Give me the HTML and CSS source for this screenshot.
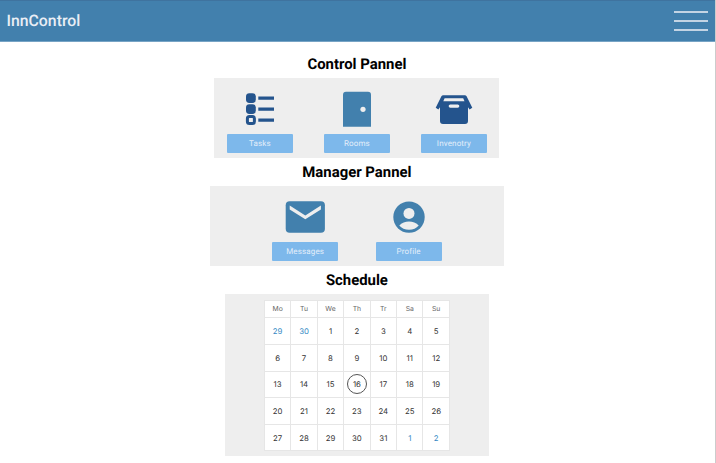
FILE: index.html
```html
<!DOCTYPE html>
<html lang="en">
<head>
<meta charset="utf-8">
<title>InnControl</title>
<link rel="stylesheet" href="styles.css">
</head>
<body>
<header class="topbar">
  <span class="brand">InnControl</span>
  <div class="menu"><i></i><i></i><i></i></div>
</header>
<main>
  <h2>Control Pannel</h2>
  <section class="panel control">
    <div class="item">
      <svg class="icon" width="66" height="44" viewBox="0 0 66 44" fill="#24548d">
        <rect x="19" y="3.2" width="9.8" height="9.8" rx="3.4"/>
        <rect x="19" y="14.2" width="9.8" height="9.8" rx="3.4"/>
        <rect x="20.4" y="26.4" width="7" height="7" rx="2" fill="none" stroke="#24548d" stroke-width="3"/>
        <path d="M31.3 6.6H47v3.1H31.3zM31.3 17.6H47v3.1H31.3zM31.3 28.6H47v3.1H31.3z"/>
      </svg>
      <div class="button">Tasks</div>
    </div>
    <div class="item">
      <svg class="icon" width="66" height="44" viewBox="0 0 66 44">
        <path fill="#4280ad" d="M19 36.8V4.8a3 3 0 0 1 3-3H44a3 3 0 0 1 3 3v32z"/>
        <circle cx="39" cy="19.3" r="2.6" fill="#eee"/>
      </svg>
      <div class="button">Rooms</div>
    </div>
    <div class="item">
      <svg class="icon" width="66" height="44" viewBox="0 0 66 44">
        <path fill="#24548d" d="M22.2 5.2H43.8Q45 5.2 45.6 6.3L51.3 17.8 48.6 19.5 47 17.2V31a3 3 0 0 1-3 3H22a3 3 0 0 1-3-3V17.2L17.4 19.5 14.7 17.8 20.4 6.3Q21 5.2 22.2 5.2z"/>
        <path fill="#eee" d="M23.6 8.2H42.2L43.5 11.3H22.3zM29.3 14.4h7.4a1.5 1.5 0 0 1 0 3.3h-7.4a1.5 1.5 0 0 1 0-3.3z"/>
      </svg>
      <div class="button">Invenotry</div>
    </div>
  </section>
  <h2>Manager Pannel</h2>
  <section class="panel manager">
    <div class="item">
      <svg class="icon" width="66" height="44" viewBox="0 0 66 44">
        <rect x="13.7" y="3.3" width="39.2" height="31.5" rx="4" fill="#4280ad"/>
        <path fill="#eee" d="M17.7 7.6L33.3 17.4 48.9 7.6V11.4L33.3 21.3 17.7 11.4z"/>
      </svg>
      <div class="button">Messages</div>
    </div>
    <div class="item">
      <svg class="icon" width="66" height="44" viewBox="0 0 66 44">
        <circle cx="33" cy="19.1" r="15.7" fill="#4280ad"/>
        <circle cx="33" cy="15.4" r="5.5" fill="#eee"/>
        <path fill="#eee" d="M23.3 27.6C25.5 24.8 29.5 23.4 33 23.4S40.5 24.8 42.7 27.6C40.5 30.4 37 31.8 33 31.8S25.5 30.4 23.3 27.6z"/>
      </svg>
      <div class="button">Profile</div>
    </div>
  </section>
  <h2>Schedule</h2>
  <section class="panel schedule">
    <div class="calendar">
      <b>Mo</b><b>Tu</b><b>We</b><b>Th</b><b>Tr</b><b>Sa</b><b>Su</b>
      <span class="other">29</span><span class="other">30</span><span>1</span><span>2</span><span>3</span><span>4</span><span>5</span>
      <span>6</span><span>7</span><span>8</span><span>9</span><span>10</span><span>11</span><span>12</span>
      <span>13</span><span>14</span><span>15</span><span><em>16</em></span><span>17</span><span>18</span><span>19</span>
      <span>20</span><span>21</span><span>22</span><span>23</span><span>24</span><span>25</span><span>26</span>
      <span>27</span><span>28</span><span>29</span><span>30</span><span>31</span><span class="other">1</span><span class="other">2</span>
    </div>
  </section>
</main>
</body>
</html>
```
FILE: styles.css
```css
* { box-sizing: border-box; }
body {
  margin: 0;
  height: 463px;
  overflow: hidden;
  background: #fff;
  border-right: 1px solid #ccc;
  font-family: Roboto, sans-serif;
  text-rendering: geometricPrecision;
}
.topbar {
  height: 42px;
  margin-right: -1px;
  padding: 0 7px 1.5px 6.5px;
  border-top: 1px solid #3f739f;
  border-right: 1px solid #6596bb;
  border-bottom: 1px solid #77a4c5;
  background: #4280ad;
  display: flex;
  align-items: center;
  justify-content: space-between;
}
.brand { color: #e9eef5; font-size: 15.8px; font-weight: 500; }
.menu { width: 34px; display: grid; gap: 7px; padding-top: 1px; }
.menu i { height: 2px; background: #c3d4e4; }
main { display: flex; flex-direction: column; align-items: center; padding: 8.4px 1.2px 0 0; }
h2 {
  margin: 0;
  height: 28px;
  line-height: 28px;
  font-size: 14.9px;
  font-weight: 700;
  color: #000;
}
.panel { height: 80px; background: #eee; display: flex; justify-content: center; }
.control { width: 285px; gap: 31px; padding-top: 12px; }
.manager { width: 294px; gap: 37.5px; padding-top: 12px; }
.schedule { width: 264px; height: 162px; padding-top: 6px; }
.item { width: 66px; display: flex; flex-direction: column; }
.icon { display: block; flex: none; }
.button {
  height: 18.5px;
  line-height: 19.5px;
  border-radius: 1px;
  background: #7db8eb;
  color: #e3eefa;
  font-size: 8px;
  letter-spacing: 0.15px;
  text-align: center;
}
.calendar {
  width: 186px;
  height: 151px;
  display: grid;
  grid-template-columns: repeat(7, 1fr);
  grid-template-rows: 17px repeat(5, 1fr);
  border: solid #e6e6e6;
  border-width: 1px 0 0 1px;
  background: #fff;
  font-family: Inter, sans-serif;
  font-size: 7.8px;
  color: #333;
}
.calendar b, .calendar span {
  display: flex;
  align-items: center;
  justify-content: center;
  border: solid #e6e6e6;
  border-width: 0 1px 1px 0;
}
.calendar b { font-weight: 400; font-size: 6.8px; line-height: 8px; color: #666; }
.calendar .other { color: #3389c4; }
.calendar em {
  flex: none;
  width: 20px;
  height: 20px;
  line-height: 18.8px;
  border: 1px solid #555;
  border-radius: 50%;
  font-style: normal;
  text-align: center;
}
```
